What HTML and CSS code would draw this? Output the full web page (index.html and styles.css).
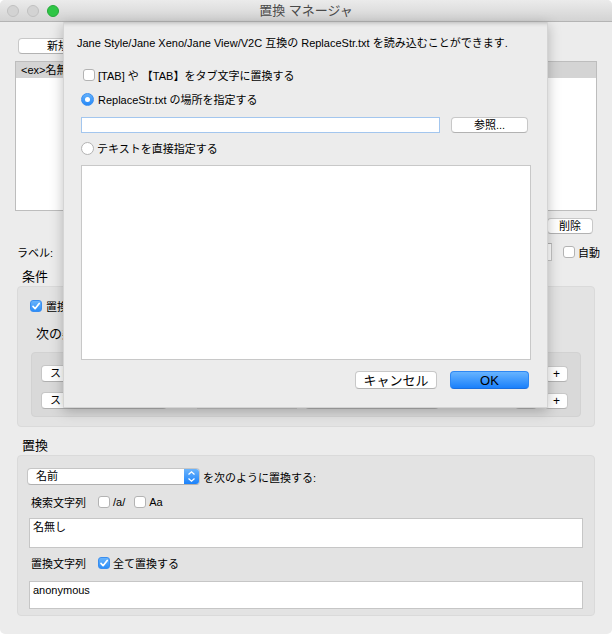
FILE: index.html
```html
<!DOCTYPE html>
<html lang="ja">
<head>
<meta charset="utf-8">
<title>置換 マネージャ</title>
<link rel="stylesheet" href="styles.css">
</head>
<body>
<div class="window">
  <div class="titlebar">
    <div class="lights"><span class="light gray"></span><span class="light gray"></span><span class="light green"></span></div>
    <div class="title">置換 マネージャ</div>
    <div class="tb-spacer"></div>
  </div>

  <div class="content">
    <div class="toolbar"><div class="btn small new">新規</div></div>
    <div class="list"><div class="list-row">&lt;ex&gt;名無し</div></div>
    <div class="del-row"><div class="btn small del">削除</div></div>
    <div class="label-row">
      <span class="lbl">ラベル:</span>
      <div class="field label-field"></div>
      <span class="cb auto-cb"></span>
      <span class="cb-text">自動</span>
    </div>

    <div class="heading h-cond">条件</div>
    <div class="group cond">
      <div class="check-row">
        <span class="cb on"><svg viewBox="0 0 12 12" width="12" height="12"><path d="M3 6.4 L5.1 8.7 L9.2 3.4" fill="none" stroke="#fff" stroke-width="1.7" stroke-linecap="round" stroke-linejoin="round"/></svg></span>
        <span>置換を有効にする</span>
      </div>
      <div class="cond-title">次の条件に一致する場合:</div>
      <div class="inner">
        <div class="crow">
          <div class="popup p1"><span class="ptext">スレッドタイトル</span><span class="parrow"><svg viewBox="0 0 15 17" width="15" height="17"><path d="M4.5 6.5 L7.5 3.8 L10.5 6.5 M4.5 10.5 L7.5 13.2 L10.5 10.5" fill="none" stroke="#fff" stroke-width="1.3"/></svg></span></div>
          <div class="field cf"></div>
          <div class="popup p2"><span class="ptext">を含む</span><span class="parrow"><svg viewBox="0 0 15 17" width="15" height="17"><path d="M4.5 6.5 L7.5 3.8 L10.5 6.5 M4.5 10.5 L7.5 13.2 L10.5 10.5" fill="none" stroke="#fff" stroke-width="1.3"/></svg></span></div>
          <span class="cb on c-on"><svg viewBox="0 0 12 12" width="12" height="12"><path d="M3 6.4 L5.1 8.7 L9.2 3.4" fill="none" stroke="#fff" stroke-width="1.7" stroke-linecap="round" stroke-linejoin="round"/></svg></span>
          <span class="cb c-off"></span>
          <div class="btn small minus">−</div>
          <div class="btn small plus">+</div>
        </div>
        <div class="crow">
          <div class="popup p1"><span class="ptext">スレッドタイトル</span><span class="parrow"><svg viewBox="0 0 15 17" width="15" height="17"><path d="M4.5 6.5 L7.5 3.8 L10.5 6.5 M4.5 10.5 L7.5 13.2 L10.5 10.5" fill="none" stroke="#fff" stroke-width="1.3"/></svg></span></div>
          <div class="field cf"></div>
          <div class="popup p2"><span class="ptext">を含む</span><span class="parrow"><svg viewBox="0 0 15 17" width="15" height="17"><path d="M4.5 6.5 L7.5 3.8 L10.5 6.5 M4.5 10.5 L7.5 13.2 L10.5 10.5" fill="none" stroke="#fff" stroke-width="1.3"/></svg></span></div>
          <span class="cb on c-on"><svg viewBox="0 0 12 12" width="12" height="12"><path d="M3 6.4 L5.1 8.7 L9.2 3.4" fill="none" stroke="#fff" stroke-width="1.7" stroke-linecap="round" stroke-linejoin="round"/></svg></span>
          <span class="cb c-off"></span>
          <div class="btn small minus">−</div>
          <div class="btn small plus">+</div>
        </div>
      </div>
    </div>

    <div class="heading h-repl">置換</div>
    <div class="group repl">
      <div class="prow">
        <div class="popup pname"><span class="ptext">名前</span><span class="parrow"><svg viewBox="0 0 15 17" width="15" height="17"><path d="M4.5 6.5 L7.5 3.8 L10.5 6.5 M4.5 10.5 L7.5 13.2 L10.5 10.5" fill="none" stroke="#fff" stroke-width="1.3"/></svg></span></div>
        <span class="after-pop">を次のように置換する:</span>
      </div>
      <div class="srow">
        <span class="row-label">検索文字列</span>
        <span class="cb s-cb1"></span><span class="cb-text">/a/</span>
        <span class="cb s-cb2"></span><span class="cb-text">Aa</span>
      </div>
      <div class="ta ta1">名無し</div>
      <div class="srow rrow">
        <span class="row-label">置換文字列</span>
        <span class="cb on s-cb1"><svg viewBox="0 0 12 12" width="12" height="12"><path d="M3 6.4 L5.1 8.7 L9.2 3.4" fill="none" stroke="#fff" stroke-width="1.7" stroke-linecap="round" stroke-linejoin="round"/></svg></span>
        <span class="cb-text">全て置換する</span>
      </div>
      <div class="ta ta2">anonymous</div>
    </div>
  </div>

  <div class="sheet">
    <div class="intro">Jane Style/Jane Xeno/Jane View/V2C 互換の ReplaceStr.txt を読み込むことができます.</div>
    <div class="s-cbrow"><span class="cb"></span><span class="cb-text">[TAB] や 【TAB】をタブ文字に置換する</span></div>
    <div class="s-radio r1"><span class="radio on"></span><span class="cb-text">ReplaceStr.txt の場所を指定する</span></div>
    <div class="s-field-row">
      <div class="field focus path-field"></div>
      <div class="btn small browse">参照...</div>
    </div>
    <div class="s-radio r2"><span class="radio"></span><span class="cb-text">テキストを直接指定する</span></div>
    <div class="ta s-ta"></div>
    <div class="s-buttons">
      <div class="btn reg cancel">キャンセル</div>
      <div class="btn reg ok">OK</div>
    </div>
  </div>
</div>
</body>
</html>
```

FILE: styles.css
```css
* { box-sizing: border-box; }

body {
  margin: 0;
  background: #ffffff;
  font-family: "Liberation Sans", "Noto Sans CJK JP", sans-serif;
  font-size: 11px;
  color: #000;
}

.window {
  position: relative;
  width: 612px;
  height: 634px;
  background: #ececec;
  border-radius: 5px 5px 5px 5px;
  overflow: hidden;
}

/* title bar */
.titlebar {
  height: 22px;
  display: flex;
  align-items: center;
  background: linear-gradient(#ebebeb, #d3d3d3);
  border-bottom: 1px solid #b4b4b4;
}
.lights {
  width: 80px;
  display: flex;
  gap: 8px;
  padding-left: 7px;
  padding-top: 1px;
}
.light {
  width: 12px;
  height: 12px;
  border-radius: 50%;
}
.light.gray { background: #d3d3d3; border: 1px solid #c0c0c0; }
.light.green { background: #2fc646; border: 1px solid #26a83a; }
.title {
  flex: 1;
  text-align: center;
  font-size: 13px;
  color: #4a4a4a;
  line-height: 22px;
}
.tb-spacer { width: 80px; }

/* generic controls */
.btn {
  background: #fff;
  border: 1px solid #c8c8c8;
  border-bottom-color: #b2b2b2;
  border-radius: 4px;
  display: flex;
  align-items: center;
  justify-content: center;
  font-size: 11px;
  line-height: 1;
  flex: none;
}
.btn.small { height: 16px; }
.btn.reg { height: 18px; font-size: 13px; }

.field {
  background: #fff;
  border: 1px solid #c4c4c4;
  border-top-color: #b0b0b0;
  flex: none;
}

.cb {
  width: 12px;
  height: 12px;
  border-radius: 3px;
  background: #fff;
  border: 1px solid #b3b3b3;
  flex: none;
  display: inline-block;
}
.cb.on {
  background: linear-gradient(#68b3fb, #2c8ef8);
  border: 1px solid #3a8ef0;
}
.cb.on svg { display: block; margin: -1px; }

.radio {
  width: 13px;
  height: 13px;
  border-radius: 50%;
  background: #fff;
  border: 1px solid #b3b3b3;
  flex: none;
  display: flex;
  align-items: center;
  justify-content: center;
}
.radio.on {
  background: linear-gradient(#64b1fb, #2589f8);
  border: 1px solid #3a8ef0;
}
.radio.on::after {
  content: "";
  width: 5px;
  height: 5px;
  border-radius: 50%;
  background: #fff;
}

.popup {
  height: 17px;
  display: flex;
  background: #fff;
  border: 1px solid #c6c6c6;
  border-bottom-color: #b0b0b0;
  border-radius: 4px;
  flex: none;
  overflow: hidden;
}
.ptext {
  flex: 1;
  padding-left: 8px;
  line-height: 15px;
  font-size: 11px;
  white-space: nowrap;
  overflow: hidden;
}
.parrow {
  width: 15px;
  background: linear-gradient(#6cb4fb, #1b82fb);
  display: flex;
  align-items: center;
  justify-content: center;
}
.parrow svg { display: block; }

.ta {
  background: #fff;
  border: 1px solid #c6c6c6;
  padding: 1px 3px;
  font-size: 11px;
  line-height: 14px;
}

.cb-text { white-space: nowrap; }

/* main window content */
.content {
  padding: 16px 15px 0;
  display: flex;
  flex-direction: column;
}
.toolbar { height: 16px; display: flex; padding-left: 3px; }
.new { width: 80px; }
.list {
  margin-top: 7px;
  height: 150px;
  background: #fff;
  border: 1px solid #bdbdbd;
}
.list-row {
  height: 16px;
  background: #d4d4d4;
  padding-left: 5px;
  line-height: 16px;
}
.del-row {
  margin-top: 7px;
  height: 16px;
  display: flex;
  justify-content: flex-end;
  padding-right: 4px;
}
.del { width: 46px; }
.label-row {
  margin-top: 9px;
  height: 18px;
  display: flex;
  align-items: center;
  padding-left: 2px;
}
.lbl { width: 52px; flex: none; }
.label-field { width: 483px; height: 18px; }
.auto-cb { margin-left: 11px; margin-right: 3px; }

.heading {
  font-size: 13px;
  line-height: 14px;
  height: 14px;
  padding-left: 7px;
}
.h-cond { margin-top: 9px; }
.h-repl { margin-top: 12px; }

.group {
  margin: 2px 2px 0;
  background: #e3e3e3;
  border: 1px solid #dadada;
  border-radius: 4px;
}
.cond {
  height: 141px;
  padding: 12px 13px 0 12px;
}
.check-row {
  height: 14px;
  display: flex;
  align-items: center;
  gap: 4px;
}
.cond-title {
  margin-top: 14px;
  padding-left: 6px;
  font-size: 13px;
  line-height: 14px;
  height: 14px;
}
.inner {
  margin-top: 11px;
  margin-left: 1px;
  height: 65px;
  background: #d9d9d9;
  border: 1px solid #d2d2d2;
  border-radius: 4px;
  padding: 12px 10px 0 9px;
  display: flex;
  flex-direction: column;
  gap: 10px;
}
.crow {
  height: 17px;
  display: flex;
  align-items: center;
}
.p1 { width: 126px; }
.cf { width: 100px; height: 17px; margin-left: 30px; }
.p2 { width: 134px; margin-left: 8px; }
.c-on { margin-left: 8px; }
.c-off { margin-left: 21px; background: #d0d0d0; border-color: #c0c0c0; }
.minus { width: 22px; margin-left: 23px; }
.plus { width: 23px; margin-left: 8px; font-size: 12px; }

.repl {
  height: 161px;
  padding: 12px 11px 0 9px;
  display: flex;
  flex-direction: column;
}
.prow {
  height: 17px;
  display: flex;
  align-items: center;
}
.pname { width: 173px; }
.after-pop { margin-left: 3px; white-space: nowrap; }
.srow {
  margin-top: 10px;
  height: 14px;
  display: flex;
  align-items: center;
  padding-left: 4px;
}
.row-label { width: 67px; flex: none; }
.s-cb1 { margin-right: 3px; }
.s-cb2 { margin-left: 9px; margin-right: 3px; }
.ta1 { margin-top: 9px; margin-left: 2px; height: 30px; }
.rrow { margin-top: 8px; }
.ta2 { margin-top: 11px; margin-left: 2px; height: 28px; }

/* sheet dialog */
.sheet {
  position: absolute;
  left: 63px;
  top: 22px;
  width: 485px;
  height: 386px;
  background: #ececec;
  border: 1px solid #d4d4d4;
  border-top: none;
  box-shadow: 0 3px 12px rgba(0, 0, 0, 0.25), inset 0 5px 4px -4px rgba(0, 0, 0, 0.22);
  padding: 14px 16px 0 13px;
  display: flex;
  flex-direction: column;
}
.intro {
  height: 14px;
  line-height: 14px;
  white-space: nowrap;
}
.s-cbrow {
  margin-top: 17px;
  height: 16px;
  display: flex;
  align-items: center;
  margin-left: 6px;
  gap: 3px;
}
.s-radio {
  height: 16px;
  display: flex;
  align-items: center;
  margin-left: 4px;
  gap: 4px;
}
.r1 { margin-top: 8px; }
.r2 { margin-top: 7px; gap: 3px; }
.s-field-row {
  margin-top: 10px;
  height: 16px;
  display: flex;
  margin-left: 4px;
}
.path-field {
  width: 359px;
  height: 16px;
  border: 1px solid #a3c6ee;
}
.browse { width: 77px; margin-left: 11px; }
.s-ta {
  margin-top: 9px;
  margin-left: 4px;
  width: 450px;
  height: 195px;
  border-color: #c8c8c8;
}
.s-buttons {
  margin-top: 11px;
  margin-left: 4px;
  width: 450px;
  height: 18px;
  display: flex;
  justify-content: flex-end;
  padding-right: 2px;
}
.cancel { width: 82px; }
.ok {
  width: 79px;
  margin-left: 13px;
  background: linear-gradient(#67b4ff, #1a80fb);
  border: 1px solid #2d87f3;
  border-bottom-color: #1a6fe0;
}
```
